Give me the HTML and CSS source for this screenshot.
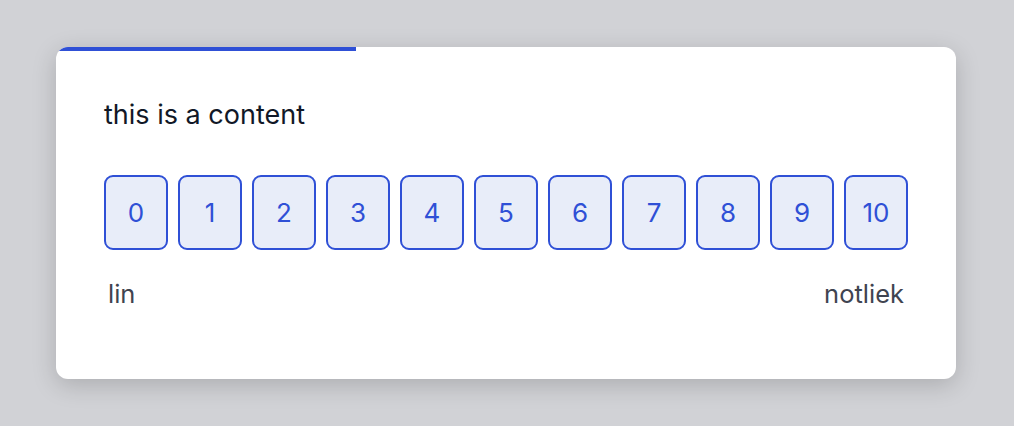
FILE: index.html
```html
<!DOCTYPE html>
<html>
<head>
<meta charset="utf-8">
<link rel="stylesheet" href="styles.css">
</head>
<body>
<div class="card">
  <div class="progress"><div class="progress-fill" style="width:33.333%"></div></div>
  <div class="content">
    <p class="title">this is a content</p>
    <div class="scale">
      <button class="opt">0</button>
      <button class="opt">1</button>
      <button class="opt">2</button>
      <button class="opt">3</button>
      <button class="opt">4</button>
      <button class="opt">5</button>
      <button class="opt">6</button>
      <button class="opt">7</button>
      <button class="opt">8</button>
      <button class="opt">9</button>
      <button class="opt">10</button>
    </div>
    <div class="labels">
      <span>lin</span>
      <span>notliek</span>
    </div>
  </div>
</div>
</body>
</html>
```

FILE: styles.css
```css
html, body {
  margin: 0;
  height: 100%;
}
body {
  background: #d1d2d6;
  font-family: Inter, "Noto Sans", sans-serif;
  display: flex;
  align-items: center;
  justify-content: center;
}
.card {
  width: 900px;
  height: 332px;
  background: #ffffff;
  border-radius: 12px;
  overflow: hidden;
  box-shadow: 0 6px 24px rgba(0, 0, 0, 0.18);
  box-sizing: border-box;
  display: flex;
  flex-direction: column;
  margin-left: -2px;
}
.progress {
  height: 4px;
  flex: none;
}
.progress-fill {
  height: 100%;
  background: #2f50d6;
}
.content {
  padding: 46px 48px 0 48px;
}
.title {
  margin: 0;
  font-size: 27px;
  line-height: 36px;
  color: #111827;
}
.scale {
  margin-top: 42px;
  display: flex;
  gap: 10px;
}
.opt {
  width: 64px;
  height: 75px;
  box-sizing: border-box;
  border: 2px solid #2f50d6;
  border-radius: 9px;
  background: #e8edf9;
  color: #2f50d6;
  font-family: Inter, "Noto Sans", sans-serif;
  font-size: 26px;
  padding: 0;
}
.labels {
  margin-top: 28px;
  padding: 0 4px;
  display: flex;
  justify-content: space-between;
  font-size: 25.5px;
  line-height: 32px;
  color: #3f4450;
}
```
